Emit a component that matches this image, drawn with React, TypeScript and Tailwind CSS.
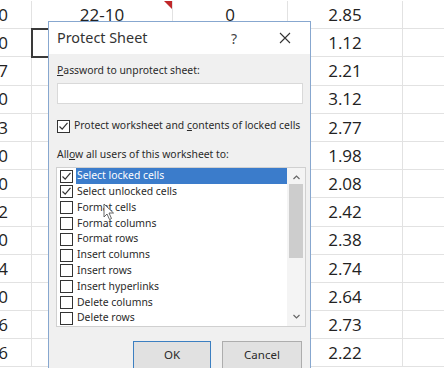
import React from 'react';

const rows: [string, string, string, string][] = [
  ['0', '22-10', '0', '2.85'],
  ['0', '', '', '1.12'],
  ['7', '', '', '2.21'],
  ['0', '', '', '3.12'],
  ['3', '', '', '2.77'],
  ['0', '', '', '1.98'],
  ['0', '', '', '2.08'],
  ['2', '', '', '2.42'],
  ['0', '', '', '2.38'],
  ['4', '', '', '2.74'],
  ['0', '', '', '2.64'],
  ['6', '', '', '2.73'],
  ['6', '', '', '2.22'],
];

const permissions = [
  { label: 'Select locked cells', checked: true },
  { label: 'Select unlocked cells', checked: true },
  { label: 'Format cells', checked: false },
  { label: 'Format columns', checked: false },
  { label: 'Format rows', checked: false },
  { label: 'Insert columns', checked: false },
  { label: 'Insert rows', checked: false },
  { label: 'Insert hyperlinks', checked: false },
  { label: 'Delete columns', checked: false },
  { label: 'Delete rows', checked: false },
];

const Check: React.FC<{ checked: boolean }> = ({ checked }) => (
  <span className="w-[13px] h-[13px] border border-[#333] bg-white flex items-center justify-center shrink-0">
    {checked && (
      <svg width="11" height="11" viewBox="0 0 11 11">
        <path d="M1.5 5.5 L4.2 8.2 L9.5 1.8" fill="none" stroke="#333" strokeWidth="1.2" />
      </svg>
    )}
  </span>
);

const Sheet: React.FC = () => (
  <div className="flex flex-col pt-[1px]">
    {rows.map((r, i) => (
      <div key={i} className="flex h-[28.2px] border-b border-[#e2e2e2] text-[17px] text-[#222]">
        <div className="w-[32px] shrink-0 border-r border-[#e2e2e2] flex items-center justify-end pr-[23px]">{r[0]}</div>
        <div className="w-[141px] shrink-0 border-r border-[#e2e2e2] flex items-center justify-center">{r[1]}</div>
        <div className="w-[115px] shrink-0 border-r border-[#e2e2e2] flex items-center justify-center relative">
          {i === 0 && (
            <span className="absolute left-[-9px] top-0 w-0 h-0 border-t-[8px] border-t-[#c0282a] border-l-[8px] border-l-transparent" />
          )}
          {r[2]}
        </div>
        <div className="w-[115px] shrink-0 border-r border-[#e2e2e2] flex items-center justify-center">{r[3]}</div>
        <div className="flex-1" />
      </div>
    ))}
  </div>
);

export default function App() {
  return (
    <div className="relative w-[444px] h-[368px] overflow-hidden bg-white" style={{ fontFamily: '"Open Sans", sans-serif' }}>
      <Sheet />
      {/* active cell */}
      <div className="absolute left-[31px] top-[28px] w-[30px] h-[30px] border-2 border-[#3a3a3a]" />

      {/* dialog */}
      <div
        className="absolute left-[48px] top-[21px] w-[263px] h-[360px] border border-[#87a7cf] bg-[#f0f0f0] flex flex-col text-[#2a2a2a]"
        style={{ fontFamily: '"Noto Sans", sans-serif' }}
      >
        <div className="h-[32px] bg-white flex items-center pl-[8px] shrink-0">
          <span className="text-[14.4px] text-[#333]">Protect Sheet</span>
          <span className="ml-auto mr-[42px] text-[14px] text-[#444]">?</span>
          <svg width="12" height="12" viewBox="0 0 12 12" className="mr-[19px]">
            <path d="M1 1 L11 11 M11 1 L1 11" stroke="#333" strokeWidth="1.1" />
          </svg>
        </div>
        <div className="flex flex-col px-[8px] text-[10.4px] whitespace-nowrap">
          <div className="mt-[8px] h-[18px] flex items-center">
            <span><span className="underline">P</span>assword to unprotect sheet:</span>
          </div>
          <div className="mt-[3px] h-[21px] w-[246px] bg-white border border-[#d9d9d9]" />
          <div className="mt-[14px] flex items-center gap-[4px] h-[16px]">
            <Check checked />
            <span>Protect worksheet and <span className="underline">c</span>ontents of locked cells</span>
          </div>
          <div className="mt-[13px] h-[16px] flex items-center">
            <span>All<span className="underline">o</span>w all users of this worksheet to:</span>
          </div>
          <div className="mt-[4px] ml-[-1px] w-[250px] h-[160px] bg-white border border-[#d0d0d0] flex">
            <div className="flex-1 flex flex-col pl-[3px]">
              {permissions.map((p, i) => (
                <div key={p.label} className="h-[16px] flex items-center gap-[3px]">
                  <Check checked={p.checked} />
                  <span
                    className={
                      i === 0
                        ? 'flex-1 h-[16px] bg-[#3b7ccb] text-white pl-[1px] flex items-center'
                        : 'flex-1 pl-[1px]'
                    }
                  >
                    {p.label}
                  </span>
                </div>
              ))}
            </div>
            <div className="w-[18px] flex flex-col items-center bg-[#f4f4f4]">
              <svg width="9" height="14" viewBox="0 0 9 14" className="mt-[2px]">
                <path d="M1.5 9 L4.5 6 L7.5 9" fill="none" stroke="#666" strokeWidth="1.2" />
              </svg>
              <div className="w-[14px] h-[74px] bg-[#cdcdcd]" />
              <div className="flex-1" />
              <svg width="9" height="14" viewBox="0 0 9 14" className="mb-[2px]">
                <path d="M1.5 5 L4.5 8 L7.5 5" fill="none" stroke="#666" strokeWidth="1.2" />
              </svg>
            </div>
          </div>
          <div className="mt-[14px] flex justify-end gap-[11px] text-[11.5px]">
            <div className="w-[78px] h-[28px] border border-[#3c7fc1] bg-[#e1e1e1] flex items-center justify-center">OK</div>
            <div className="w-[80px] h-[28px] border border-[#adadad] bg-[#e1e1e1] flex items-center justify-center">Cancel</div>
          </div>
        </div>
      </div>

      {/* mouse pointer */}
      <svg className="absolute left-[103px] top-[203px]" width="12" height="18" viewBox="0 0 12 18">
        <path d="M1 1 L1 14 L4 11 L6.5 16.5 L8.5 15.5 L6 10 L10.5 10 Z" fill="#fff" stroke="#555" strokeWidth="0.9" />
      </svg>
    </div>
  );
}
